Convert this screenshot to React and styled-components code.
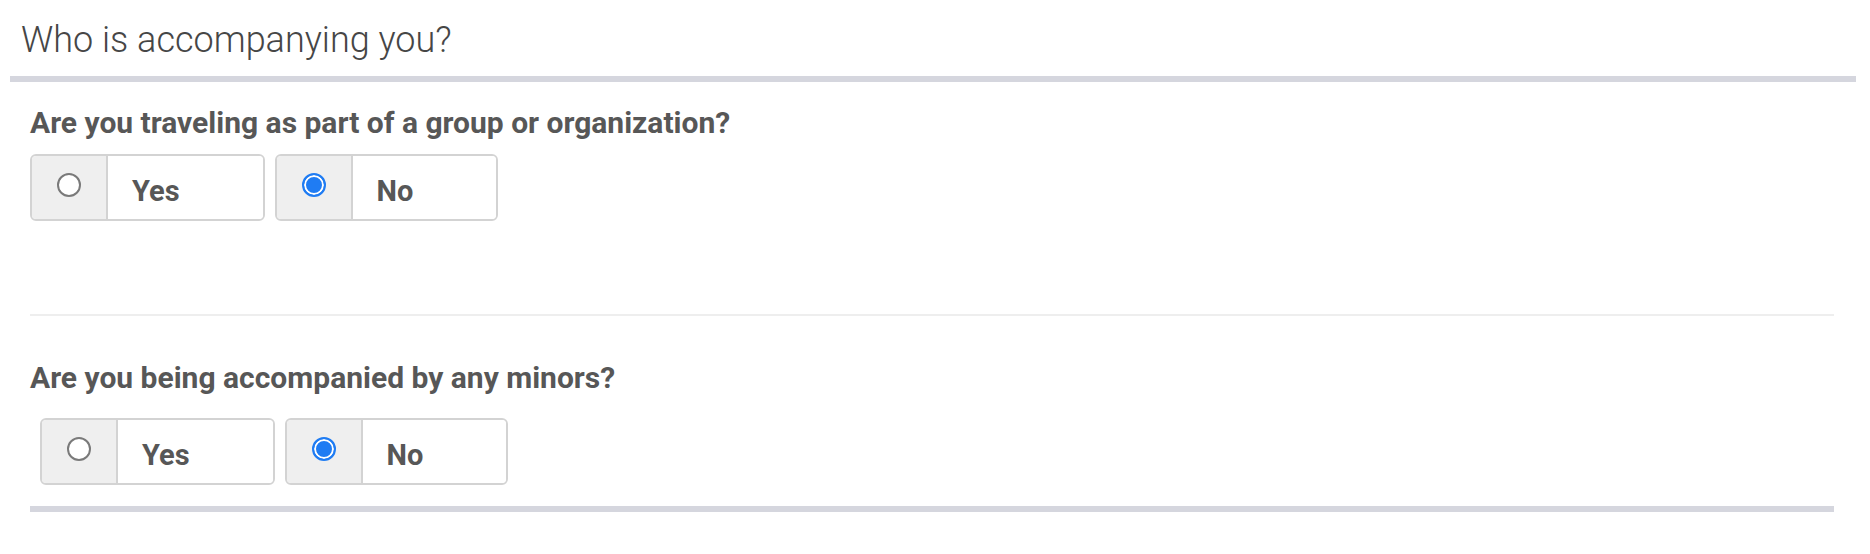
import React from "react";
import styled, { createGlobalStyle } from "styled-components";

const GlobalStyle = createGlobalStyle`
  html, body {
    margin: 0;
    padding: 0;
    background: #ffffff;
    font-family: Roboto, "Liberation Sans", Arial, sans-serif;
  }
`;

const Page = styled.div`
  padding: 0 14px 0 10px;
  background: #fff;
`;

const Header = styled.header`
  padding: 19px 0 15px 11px;
  border-bottom: 6px solid #d5d6de;
`;

const Title = styled.h1`
  margin: 0;
  font-family: Roboto, "Liberation Sans", sans-serif;
  font-weight: 300;
  font-size: 36px;
  line-height: 42px;
  color: #464646;
`;

const Body = styled.div`
  margin: 0 22px 0 20px;
  border-bottom: 6px solid #d5d6de;
`;

const Question = styled.section`
  padding: ${(p) => p.$pad};
  border-top: ${(p) => (p.$divided ? "2px solid #eeeeee" : "none")};
`;

const Label = styled.h2`
  margin: 0;
  font-family: Roboto, "Liberation Sans", sans-serif;
  font-weight: 700;
  font-size: 30px;
  line-height: 35px;
  color: #575757;
`;

const Options = styled.div`
  display: flex;
  gap: 10px;
  margin-top: ${(p) => p.$top}px;
  padding-left: ${(p) => p.$indent}px;
`;

const Option = styled.label`
  display: flex;
  height: 63px;
  border: 2px solid #d3d3d3;
  border-radius: 6px;
  overflow: hidden;
  cursor: pointer;
`;

const RadioCell = styled.span`
  width: 76px;
  display: flex;
  justify-content: center;
  align-items: flex-start;
  padding-top: 17px;
  box-sizing: border-box;
  background: #efefef;
  border-right: 2px solid #d3d3d3;
`;

const Radio = styled.span`
  width: 24px;
  height: 24px;
  box-sizing: border-box;
  border-radius: 50%;
  border: 2px solid ${(p) => (p.$checked ? "#1f7cf3" : "#7a7a7a")};
  background: ${(p) => (p.$checked ? "#1f7cf3" : "#ffffff")};
  box-shadow: ${(p) => (p.$checked ? "inset 0 0 0 2px #ffffff" : "none")};
`;

const Text = styled.span`
  display: block;
  padding: 18px 83px 0 24px;
  font-family: Roboto, "Liberation Sans", sans-serif;
  font-weight: 700;
  font-size: 29px;
  line-height: 34px;
  color: #575757;
  background: #fff;
`;

function Choice({ label, checked }) {
  return (
    <Option>
      <RadioCell>
        <Radio $checked={checked} />
      </RadioCell>
      <Text>{label}</Text>
    </Option>
  );
}

export default function App() {
  return (
    <>
      <GlobalStyle />
      <Page>
        <Header>
          <Title>Who is accompanying you?</Title>
        </Header>
        <Body>
          <Question $pad="23px 0 93px 0">
            <Label>Are you traveling as part of a group or organization?</Label>
            <Options $top={14} $indent={0}>
              <Choice label="Yes" checked={false} />
              <Choice label="No" checked={true} />
            </Options>
          </Question>
          <Question $divided $pad="44px 0 21px 0">
            <Label>Are you being accompanied by any minors?</Label>
            <Options $top={23} $indent={10}>
              <Choice label="Yes" checked={false} />
              <Choice label="No" checked={true} />
            </Options>
          </Question>
        </Body>
      </Page>
    </>
  );
}
